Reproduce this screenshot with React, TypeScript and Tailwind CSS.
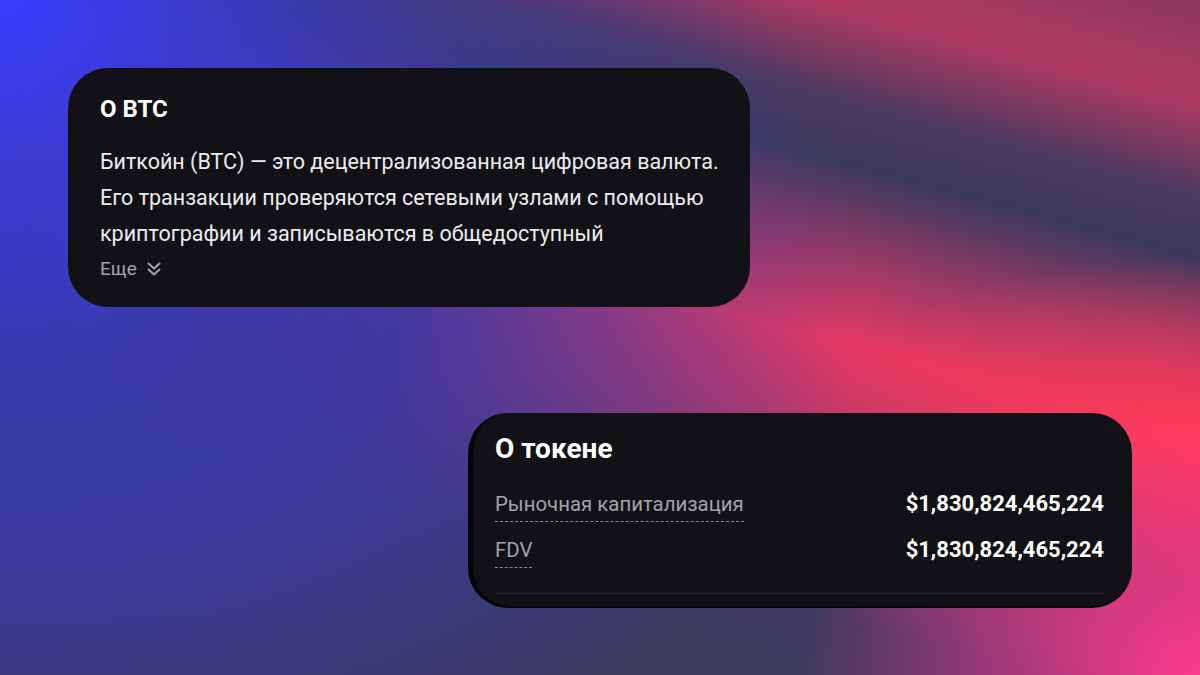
import React from 'react';

const bg =
  'bg-[radial-gradient(ellipse_420px_340px_at_0%_0%,#3c3cff_0%,rgba(60,60,240,0.5)_50%,rgba(60,60,220,0)_100%),radial-gradient(ellipse_860px_580px_at_0%_40%,rgba(58,58,185,1)_0%,rgba(58,58,165,0.92)_48%,rgba(58,58,160,0)_100%),radial-gradient(ellipse_400px_280px_at_100%_100%,#ff3a8c_0%,rgba(255,58,140,0)_100%),radial-gradient(ellipse_380px_170px_at_100%_63%,rgba(255,58,88,0.9)_0%,rgba(255,58,88,0)_100%),linear-gradient(15deg,#3a3a5a_0%,#3e3a62_28%,#b43a6a_46%,#e83a62_56%,#a03a66_64%,#3c3a5c_74%,#4a3a5e_80%,#b23a62_90%,#8a3a5c_100%)]';

const rows = [
  { label: 'Рыночная капитализация', value: '$1,830,824,465,224' },
  { label: 'FDV', value: '$1,830,824,465,224' },
];

const DoubleChevron = () => (
  <svg width="16" height="16" viewBox="0 0 16 16" fill="none" stroke="currentColor" strokeWidth="2" strokeLinecap="round" strokeLinejoin="round">
    <path d="M2.5 2.5 8 7.5l5.5-5" />
    <path d="M2.5 8.5 8 13.5l5.5-5" />
  </svg>
);

export default function App() {
  return (
    <div
      className={`w-[1200px] h-[675px] overflow-hidden bg-[#3a3a5a] ${bg} pt-[68px] pl-[68px] font-['Roboto','Noto_Sans',sans-serif]`}
    >
      {/* О BTC */}
      <div className="w-[682px] rounded-[40px] bg-[#111116] px-8 pt-[26px] pb-[26px]">
        <h2 className="text-[24px] leading-[30px] font-bold text-white">О BTC</h2>
        <p className="mt-5 whitespace-nowrap text-[21.5px] leading-[36px] text-[#ececf0]">
          Биткойн (BTC) — это децентрализованная цифровая валюта.
          <br />
          Его транзакции проверяются сетевыми узлами с помощью
          <br />
          криптографии и записываются в общедоступный
        </p>
        <button className="mt-[5px] flex items-center gap-[9px] text-[19px] leading-6 text-[#a3a3ab]">
          Еще
          <DoubleChevron />
        </button>
      </div>

      {/* О токене */}
      <div className="ml-[400px] mt-[106px] w-[664px] rounded-[40px] bg-[#111116] border-l-[5px] border-b-2 border-[#050507] pl-[22px] pr-7 pt-5 pb-[12px]">
        <h2 className="text-[28px] leading-8 font-bold text-white">О токене</h2>
        <div className="mt-[25px] flex flex-col gap-[14px]">
          {rows.map((r) => (
            <div key={r.label} className="flex items-start justify-between">
              <span className="border-b border-dashed border-[#8a8a92] pb-[3px] text-[20.4px] leading-7 text-[#a3a3ab]">
                {r.label}
              </span>
              <span className="text-[22px] leading-7 font-bold text-white">{r.value}</span>
            </div>
          ))}
        </div>
        <div className="mt-[25px] h-px bg-[#25252b]" />
      </div>
    </div>
  );
}
